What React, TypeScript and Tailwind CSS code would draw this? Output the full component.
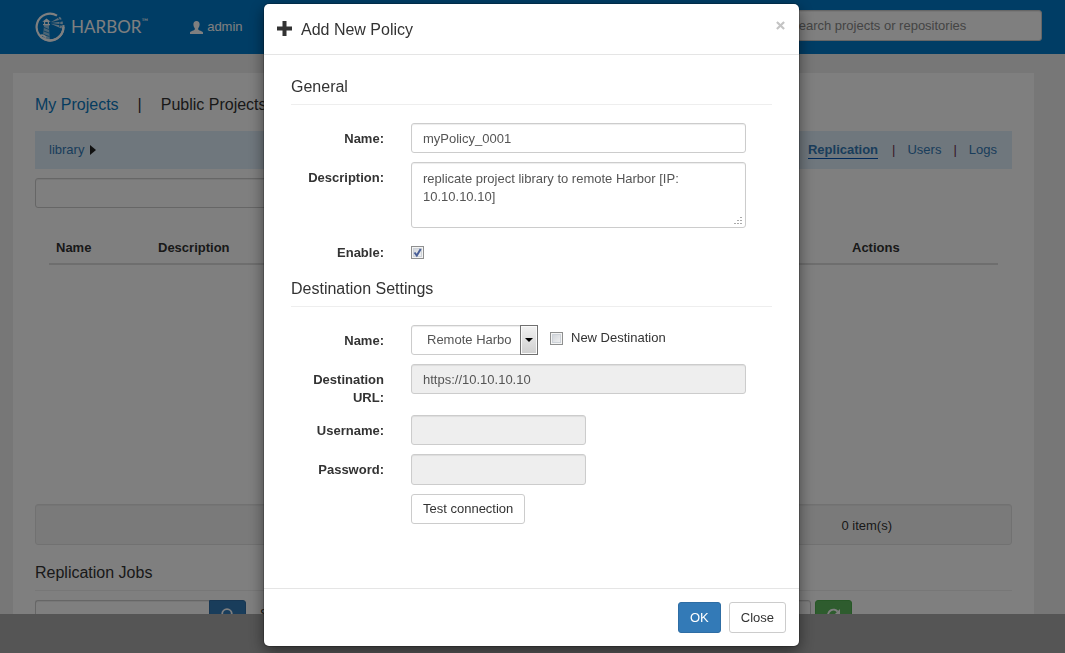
import { useState } from "react";
import type { ReactNode } from "react";

const field =
  "block rounded-[3px] border border-[#ccc] px-[11px] text-[13px] leading-[18px] text-[#555] shadow-[inset_0_1px_1px_rgba(0,0,0,0.075)] outline-none";

function HarborLogo() {
  return (
    <a href="#home" className="flex items-center gap-[6px] text-white">
      <svg viewBox="0 0 30 30" className="size-[30px]" fill="none" stroke="currentColor" aria-hidden="true">
        <path d="M22 3.600A13.400 13.400 0 1 0 28.300 13.200" strokeWidth="2.200" />
        <path d="M28.400 15A13.400 13.400 0 0 1 9 27" strokeWidth="2.200" />
        <path d="M9.200 12h4.600l1 15.500-7-1.500z" fill="currentColor" stroke="none" opacity="0.6" />
        <path d="M9 15.500l5 2M8.800 19l5.400 2M8.600 22.500l5.800 2" stroke="#007acb" strokeWidth="0.800" />
        <path d="M8 12.600h7M9.600 12V9.400h3.800V12M9 9.200l2.500-2 2.500 2z" strokeWidth="1.200" />
        <path d="M15.600 10.200L25 4.800l1.800 2.400zM15.600 11l12.200-1.600v2.800zM15.600 11.800l11.800 2-1 2.800z" fill="currentColor" stroke="none" opacity="0.75" />
        <path d="M22.400 4.400l3 5M25 8.400l-.4 6.400" stroke="#007acb" strokeWidth="0.800" />
        <path d="M5 24c2-1.600 4-.8 6 1.400" strokeWidth="1.600" />
      </svg>
      <span className="flex items-start font-['Lato'] text-[17px] leading-5">
        HARBOR<sup className="top-0 pt-[1px] text-[9px] leading-2">™</sup>
      </span>
    </a>
  );
}

function SearchIcon() {
  return (
    <svg viewBox="0 0 14 14" className="size-[14px]" fill="none" stroke="currentColor" strokeWidth="1.800" aria-hidden="true">
      <circle cx="6" cy="6" r="4.800" />
      <path d="M9.500 9.500l3.500 3.500" />
    </svg>
  );
}

function RefreshIcon() {
  return (
    <svg viewBox="0 0 14 14" className="size-[14px]" fill="none" stroke="currentColor" strokeWidth="2" aria-hidden="true">
      <path d="M1.600 9A5.300 5.300 0 0 1 10.600 3.600M11 10.600A5.300 5.300 0 0 1 3.400 11.400" />
      <path d="M13 1v5.200H7.800z" fill="currentColor" stroke="none" />
    </svg>
  );
}

function Projects() {
  return (
    <div className="flex h-screen min-h-0 flex-col overflow-hidden bg-[#aaa]">
      <header className="flex h-[54px] shrink-0 items-center bg-[#007acb] pr-[23px] pl-[35px] text-white">
        <HarborLogo />
        <a href="#account" className="ml-[42px] flex items-center gap-1">
          <svg viewBox="0 0 13 13" className="size-[13px]" fill="currentColor" aria-hidden="true">
            <path d="M6.500 0C8.500 0 9.700 1.400 9.600 3.500 9.500 5.300 8.900 6.400 8.200 7.200v1.200c.3.900 4.300 1.500 4.800 3.100V13H0v-1.500C.5 9.900 4.500 9.300 4.800 8.400V7.200C4.100 6.400 3.500 5.300 3.400 3.500 3.300 1.400 4.500 0 6.500 0z" />
          </svg>
          admin
        </a>
        <input
          type="search"
          aria-label="Search"
          placeholder="Search projects or repositories"
          className={`${field} mt-[10px] ml-auto h-[31px] w-[264px] self-start bg-white placeholder:text-[#888]`}
        />
      </header>

      <main className="min-h-0 flex-1 overflow-hidden bg-[#eee] pt-[19px] pr-[31px] pl-[13px]">
        <div className="min-h-full bg-white px-[22px] pt-[22px]">
          <nav className="flex gap-[19px] text-[16px] leading-5">
            <a href="#mine" className="text-[#0b78c0]">My Projects</a>
            <span>|</span>
            <a href="#public">Public Projects</a>
          </nav>

          <div className="mt-4 flex h-[38px] items-center justify-between bg-[#dfeefa] pr-[15px] pl-[14px]">
            <a href="#library" className="flex items-center gap-[6px] text-[#337ab7]">
              library
              <svg viewBox="0 0 6 10" className="h-[10px] w-[6px] fill-[#222]" aria-hidden="true">
                <path d="M0 0l6 5-6 5z" />
              </svg>
            </a>
            <nav className="flex gap-3 text-[#337ab7]">
              <a href="#replication" className="mr-[2px] h-[18px] border-b border-[#0055b8] font-bold">Replication</a>
              <span className="text-[#703050]">|</span>
              <a href="#users">Users</a>
              <span className="text-[#703050]">|</span>
              <a href="#logs">Logs</a>
            </nav>
          </div>

          <input type="text" aria-label="Filter policies" className={`${field} mt-[9px] h-[30px] w-1/3 bg-white`} />

          <div className="h-[296px] px-[14px] pt-[21px]">
            <table className="w-full table-fixed text-left">
              <thead>
                <tr className="border-b-2 border-[#ddd]">
                  <th className="w-[102px] px-[7px] pt-[10px] pb-[6px]">Name</th>
                  <th className="px-[7px] pt-[10px] pb-[6px]">Description</th>
                  <th className="w-[153px] px-[7px] pt-[10px] pb-[6px]">Actions</th>
                </tr>
              </thead>
            </table>
          </div>

          <div className="flex h-[41px] items-center justify-end rounded-[3px] border border-[#e3e3e3] bg-[#f5f5f5] pt-[2px] pr-[119px] shadow-[inset_0_1px_1px_rgba(0,0,0,0.05)]">
            0 item(s)
          </div>

          <h4 className="mt-[18px] border-b border-[#eee] pb-[7px] text-[16px] leading-5">Replication Jobs</h4>

          <div className="mt-[9px] flex pr-[160px]">
            <input type="text" aria-label="Filter jobs" className={`${field} h-[30px] w-[174px] rounded-r-none border-r-0 bg-white`} />
            <button type="button" aria-label="Search jobs" className="grid h-[30px] w-[37px] place-items-center rounded-r-[3px] border border-[#2e6da4] bg-[#337ab7] text-white">
              <SearchIcon />
            </button>
            <label htmlFor="status" className="ml-[14px] pt-[5px]">Status:</label>
            <input id="status" type="text" className={`${field} ml-2 h-[30px] flex-1 bg-white`} />
            <button type="button" aria-label="Refresh" className="ml-1 grid h-[30px] w-[37px] place-items-center rounded-[3px] border border-[#4cae4c] bg-[#5cb85c] text-white">
              <RefreshIcon />
            </button>
          </div>
        </div>
      </main>

      <footer className="h-[39px] shrink-0 bg-[#aaa]" />
    </div>
  );
}

function Check({ id, defaultChecked }: { id: string; defaultChecked?: boolean }) {
  return (
    <span className="relative size-[13px] shrink-0">
      <input
        id={id}
        type="checkbox"
        defaultChecked={defaultChecked}
        className="peer block size-[13px] appearance-none border border-[#8e8f8f] bg-linear-to-br from-[#cbcfd5] to-[#f6f6f6] shadow-[inset_0_0_0_1px_#f4f4f4,inset_0_0_0_2px_#cdd2d8]"
      />
      <svg viewBox="0 0 13 13" className="pointer-events-none absolute inset-0 hidden size-[13px] peer-checked:block" fill="none" stroke="#4a5f97" strokeWidth="2" aria-hidden="true">
        <path d="M3.500 6.500l2.300 3L9.700 3" />
      </svg>
    </span>
  );
}

function Row({ label, htmlFor, children }: { label?: string; htmlFor?: string; children: ReactNode }) {
  return (
    <div className="grid min-h-[30px] grid-cols-[93px_minmax(0,1fr)] gap-x-[27px] pr-[26px]">
      {label ? (
        <label htmlFor={htmlFor} className="-mb-[1px] pt-[7px] text-right font-bold">
          {label}
        </label>
      ) : (
        <span />
      )}
      <div className="min-w-0">{children}</div>
    </div>
  );
}

function SectionTitle({ children }: { children: ReactNode }) {
  return <h4 className="mb-[18px] border-b border-[#eee] pb-[7px] text-[16px] leading-5">{children}</h4>;
}

function PolicyDialog({ onClose }: { onClose: () => void }) {
  return (
    <div className="fixed inset-0 flex items-start justify-center overflow-hidden bg-black/50 pt-1 pr-[2px]">
      <section
        role="dialog"
        aria-modal="true"
        aria-labelledby="dialog-title"
        className="w-full max-w-[535px] rounded-[5px] bg-white shadow-[0_0_0_1px_rgba(0,0,0,0.2),0_5px_15px_rgba(0,0,0,0.5)]"
      >
        <header className="flex h-[51px] items-center border-b border-[#e5e5e5] px-[13px]">
          <svg viewBox="0 0 15 15" className="mb-[2px] size-[15px] fill-[#333]" aria-hidden="true">
            <path d="M5.500 0h4v5.500H15v4H9.500V15h-4V9.500H0v-4h5.500z" />
          </svg>
          <h3 id="dialog-title" className="ml-[9px] pt-[1px] text-[16px] leading-5">Add New Policy</h3>
          <button type="button" aria-label="Dismiss" onClick={onClose} className="mt-4 ml-auto grid size-[11px] place-items-center self-start text-[#c4c4c4]">
            <svg viewBox="0 0 10 10" className="size-[9px]" fill="none" stroke="currentColor" strokeWidth="2.400" aria-hidden="true">
              <path d="M1 1l8 8M9 1l-8 8" />
            </svg>
          </button>
        </header>

        <form id="policy" onSubmit={(e) => e.preventDefault()} className="px-[27px] pt-[22px] pb-16">
          <SectionTitle>General</SectionTitle>
          <div className="flex flex-col gap-[9px]">
            <Row label="Name:" htmlFor="policy-name">
              <input id="policy-name" type="text" defaultValue="myPolicy_0001" className={`${field} h-[30px] w-full bg-white`} />
            </Row>
            <Row label="Description:" htmlFor="policy-description">
              <div className="relative">
                <textarea
                  id="policy-description"
                  defaultValue="replicate project library to remote Harbor [IP: 10.10.10.10]"
                  className={`${field} h-[66px] w-full resize-none bg-white pt-[7px]`}
                />
                <svg viewBox="0 0 8 8" className="pointer-events-none absolute right-1 bottom-[3px] size-2 fill-[#aaa]" aria-hidden="true">
                  <path d="M6 0h2v1H6zM3 3h2v1H3zM6 3h2v1H6zM0 6h2v1H0zM3 6h2v1H3zM6 6h2v1H6z" />
                </svg>
              </div>
            </Row>
            <Row label="Enable:" htmlFor="policy-enable">
              <div className="flex h-[30px] items-center">
                <Check id="policy-enable" defaultChecked />
              </div>
            </Row>
          </div>

          <div className="mt-3">
            <SectionTitle>Destination Settings</SectionTitle>
          </div>
          <div className="flex flex-col gap-[9px]">
            <Row label="Name:" htmlFor="destination-name">
              <div className="flex">
                <div className="relative w-[127px]">
                  <select id="destination-name" className={`${field} h-[30px] w-full appearance-none bg-white pr-5 pl-[15px]`}>
                    <option>Remote Harbo</option>
                  </select>
                  <span className="pointer-events-none absolute inset-y-0 right-0 grid w-[18px] place-items-center border border-[#707070] bg-linear-to-b from-[#f2f2f2] to-[#cfcfcf] shadow-[inset_0_0_0_1px_#fafafa]">
                    <svg viewBox="0 0 8 4" className="h-1 w-2 fill-black" aria-hidden="true">
                      <path d="M0 0h8L4 4z" />
                    </svg>
                  </span>
                </div>
                <div className="ml-3 flex h-[26px] items-center gap-2">
                  <Check id="destination-new" />
                  <label htmlFor="destination-new">New Destination</label>
                </div>
              </div>
            </Row>
            <Row label="Destination URL:" htmlFor="destination-url">
              <input id="destination-url" type="text" disabled defaultValue="https://10.10.10.10" className={`${field} h-[30px] w-full bg-[#eee]`} />
            </Row>
            <Row label="Username:" htmlFor="destination-user">
              <input id="destination-user" type="text" disabled className={`${field} h-[30px] w-[175px] bg-[#eee]`} />
            </Row>
            <Row label="Password:" htmlFor="destination-password">
              <input id="destination-password" type="password" disabled className={`${field} h-[31px] w-[175px] bg-[#eee]`} />
            </Row>
            <Row>
              <button type="button" className="h-[30px] rounded-[3px] border border-[#ccc] bg-white px-[11px]">
                Test connection
              </button>
            </Row>
          </div>
        </form>

        <footer className="flex justify-end gap-2 border-t border-[#e5e5e5] p-[13px]">
          <button type="submit" form="policy" className="h-[31px] rounded-[3px] border border-[#2e6da4] bg-[#337ab7] px-[11px] text-white">
            OK
          </button>
          <button type="button" onClick={onClose} className="h-[31px] rounded-[3px] border border-[#ccc] bg-white px-[11px]">
            Close
          </button>
        </footer>
      </section>
    </div>
  );
}

export default function App() {
  const [open, setOpen] = useState(true);
  return (
    <div className="font-['Liberation_Sans',Arial,sans-serif] text-[13px] leading-[18px] text-[#333]">
      <Projects />
      {open && <PolicyDialog onClose={() => setOpen(false)} />}
    </div>
  );
}
